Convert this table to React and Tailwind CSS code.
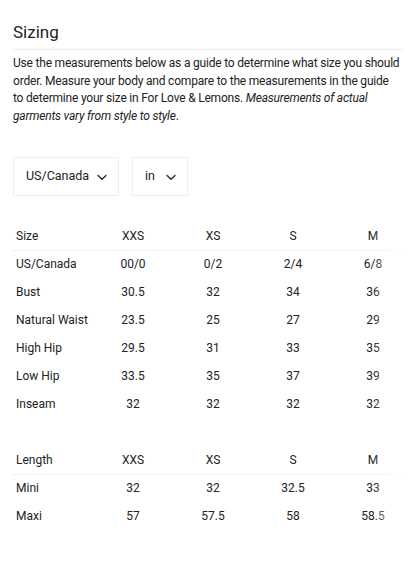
import React from 'react';

const sizes = ['XXS', 'XS', 'S', 'M', 'L', 'XL'];

const bodyRows = [
  ['US/Canada', '00/0', '0/2', '2/4', '6/8', '10/12', '14'],
  ['Bust', '30.5', '32', '34', '36', '38', '40'],
  ['Natural Waist', '23.5', '25', '27', '29', '31', '33'],
  ['High Hip', '29.5', '31', '33', '35', '37', '39'],
  ['Low Hip', '33.5', '35', '37', '39', '41', '43'],
  ['Inseam', '32', '32', '32', '32', '32', '32'],
];

const lengthRows = [
  ['Mini', '32', '32', '32.5', '33', '33.5', '34'],
  ['Maxi', '57', '57.5', '58', '58.5', '59', '59.5'],
];

const Chevron = () => (
  <svg width="12" height="12" viewBox="0 0 12 12" fill="none" stroke="#222" strokeWidth="1.3" strokeLinecap="round" strokeLinejoin="round">
    <path d="M2 4.5 6 8.2l4-3.7" />
  </svg>
);

const SizeTable = ({ head, rows }) => (
  <div className="relative overflow-hidden">
    <table className="w-[560px] border-collapse text-[12px] text-[#222]">
      <thead>
        <tr className="border-b border-[#f0f0f0]">
          <th className="w-[80px] h-[28px] pl-[3px] text-left font-normal">{head}</th>
          {sizes.map(s => (
            <th key={s} className="w-[80px] text-center font-normal">{s}</th>
          ))}
        </tr>
      </thead>
      <tbody>
        {rows.map(r => (
          <tr key={r[0]} className="h-[28px]">
            <td className="pl-[3px] whitespace-nowrap">{r[0]}</td>
            {r.slice(1).map((v, i) => (
              <td key={i} className="text-center">{v}</td>
            ))}
          </tr>
        ))}
      </tbody>
    </table>
    {/* right edge fade */}
    <div className="absolute top-0 bottom-0 right-0 w-[30px] bg-gradient-to-r from-white/0 to-white" />
  </div>
);

export default function App() {
  return (
    <div className="min-h-screen bg-white px-[13px] pt-[20px] text-[#222]" style={{ fontFamily: 'Roboto, "Liberation Sans", sans-serif' }}>
      <h2 className="text-[17px] leading-[24px] pb-[5px] border-b border-[#eee]">Sizing</h2>
      <p className="mt-[5px] text-[12px] leading-[17.5px] tracking-[-0.2px] whitespace-nowrap">
        Use the measurements below as a guide to determine what size you should<br />
        order. Measure your body and compare to the measurements in the guide<br />
        to determine your size in For Love &amp; Lemons. <em>Measurements of actual<br />
        garments vary from style to style</em>.
      </p>

      <div className="flex gap-[13px] mt-[32px]">
        <div className="w-[106px] h-[39px] border border-[#eee] flex items-center justify-between pl-[12px] pr-[10px] text-[12.5px]">
          <span>US/Canada</span>
          <Chevron />
        </div>
        <div className="w-[56px] h-[39px] border border-[#eee] flex items-center justify-between pl-[12px] pr-[10px] text-[12.5px]">
          <span>in</span>
          <Chevron />
        </div>
      </div>

      <div className="mt-[26px]">
        <SizeTable head="Size" rows={bodyRows} />
      </div>

      <div className="mt-[28px]">
        <SizeTable head="Length" rows={lengthRows} />
      </div>
    </div>
  );
}
